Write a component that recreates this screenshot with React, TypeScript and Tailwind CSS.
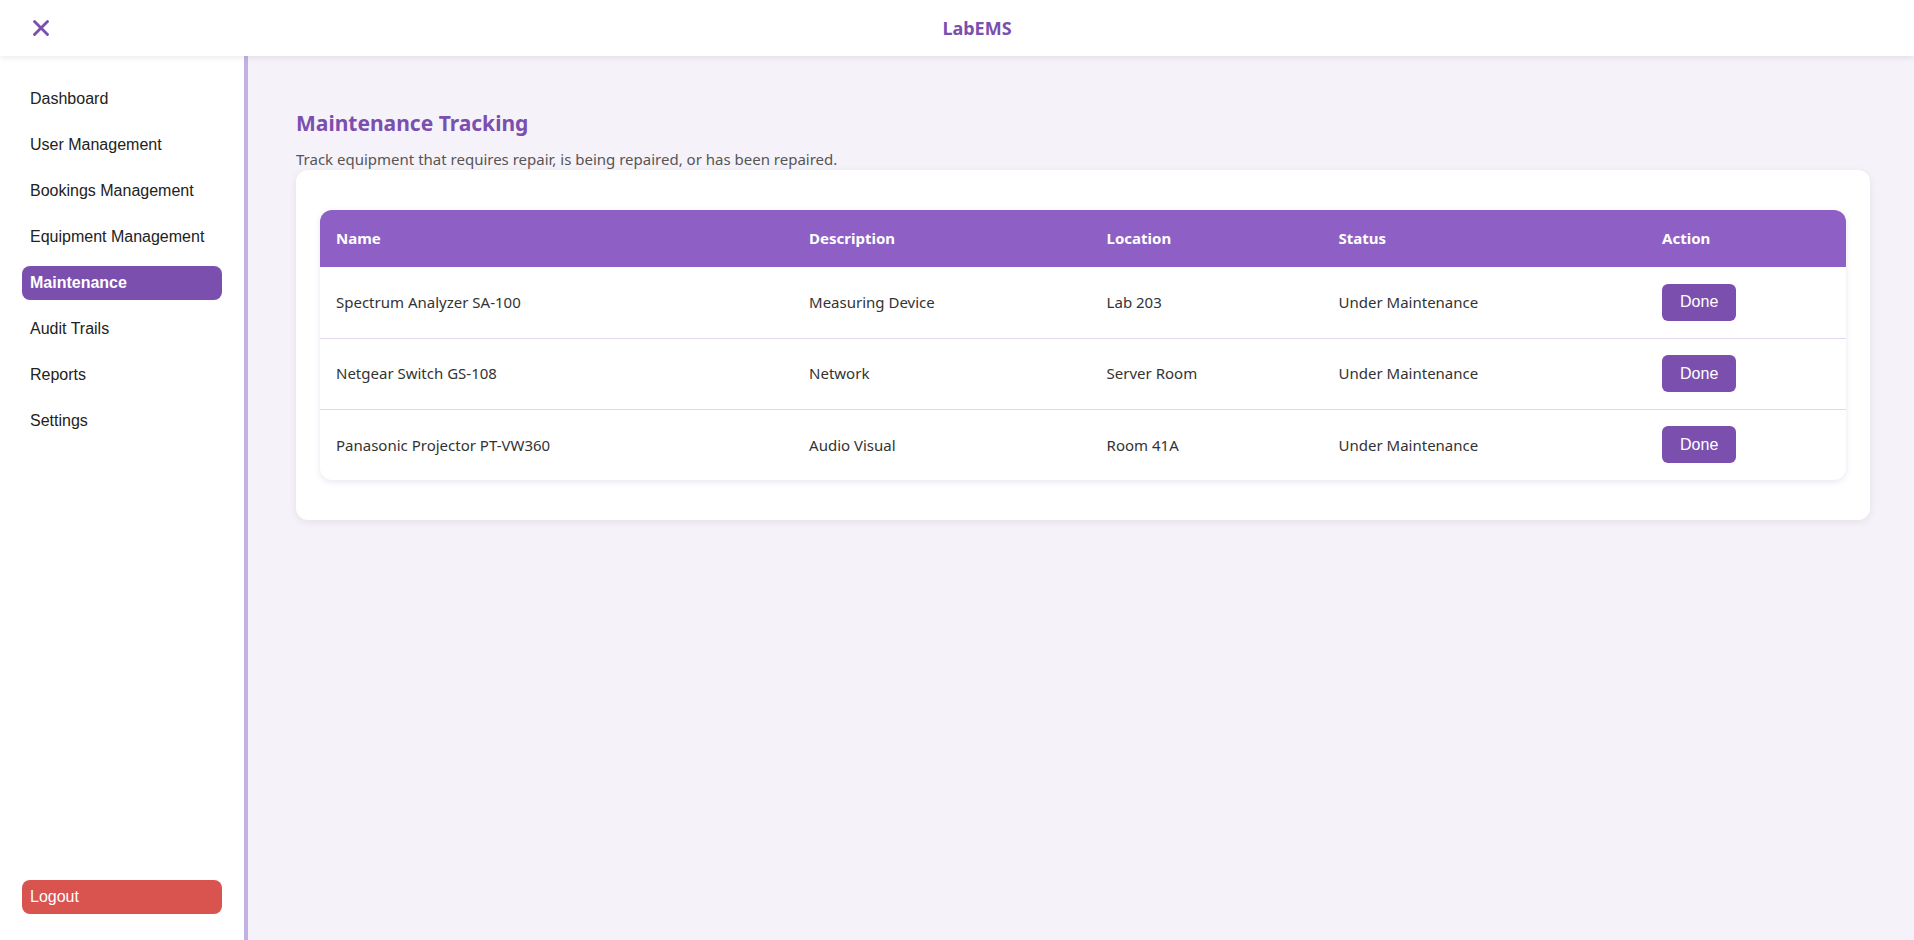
import { X } from "lucide-react";

const NAV = [
  "Dashboard",
  "User Management",
  "Bookings Management",
  "Equipment Management",
  "Maintenance",
  "Audit Trails",
  "Reports",
  "Settings",
];

const ROWS = [
  { name: "Spectrum Analyzer SA-100", desc: "Measuring Device", loc: "Lab 203", status: "Under Maintenance" },
  { name: "Netgear Switch GS-108", desc: "Network", loc: "Server Room", status: "Under Maintenance" },
  { name: "Panasonic Projector PT-VW360", desc: "Audio Visual", loc: "Room 41A", status: "Under Maintenance" },
];

const SEGOE = "font-['Noto_Sans',sans-serif]";

function Sidebar() {
  return (
    <aside className="w-[248px] shrink-0 bg-white border-r-4 border-[#c3b1e3] flex flex-col justify-between px-[22px] pt-[26px] pb-[26px] font-['Liberation_Sans',Arial,sans-serif]">
      <nav className="flex flex-col gap-3">
        {NAV.map((n) => {
          const active = n === "Maintenance";
          return (
            <a
              key={n}
              className={`h-[34px] flex items-center px-2 rounded-lg text-[16px] ${
                active ? "bg-[#7b4fae] text-white font-bold" : "text-[#222]"
              }`}
            >
              {n}
            </a>
          );
        })}
      </nav>
      <button className="h-[34px] w-full flex items-center px-2 rounded-lg bg-[#d9534f] text-white text-[16px] text-left">
        Logout
      </button>
    </aside>
  );
}

export default function App() {
  return (
    <div className="h-[940px] flex flex-col bg-[#f5f2fa] overflow-hidden">
      <header className={`h-[56px] shrink-0 bg-white flex items-center px-6 shadow-[0_2px_6px_rgba(0,0,0,0.08)] relative z-10 ${SEGOE}`}>
        <button className="w-10 h-10 flex items-center text-[#7b4fae]">
          <X size={26} strokeWidth={2.6} className="ml-[4px]" />
        </button>
        <div className="flex-1 text-center text-[18px] font-bold text-[#7b4fae]">LabEMS</div>
      </header>
      <div className="flex flex-1 min-h-0">
        <Sidebar />
        <main className={`flex-1 pl-12 pr-11 pt-[52px] ${SEGOE}`}>
          <h1 className="text-[21px] font-bold text-[#7b4fae] leading-[30px]">Maintenance Tracking</h1>
          <p className="text-[15px] text-[#555] mt-[10px] leading-[22px]">
            Track equipment that requires repair, is being repaired, or has been repaired.
          </p>
          <div className="bg-white rounded-xl shadow-[0_2px_8px_rgba(0,0,0,0.08)] px-6 py-10">
            <div className="rounded-xl overflow-hidden shadow-[0_2px_6px_rgba(80,40,140,0.12)]">
              <table className="w-full border-collapse text-left">
                <thead>
                  <tr className="bg-[#8e5fc4] text-white h-[57px]">
                    <th className="px-4 w-[31%] font-bold text-[15px]">Name</th>
                    <th className="px-4 w-[19.5%] font-bold text-[15px]">Description</th>
                    <th className="px-4 w-[15.2%] font-bold text-[15px]">Location</th>
                    <th className="px-4 w-[21.2%] font-bold text-[15px]">Status</th>
                    <th className="px-4 font-bold text-[15px]">Action</th>
                  </tr>
                </thead>
                <tbody>
                  {ROWS.map((r, i) => (
                    <tr key={r.name} className={`h-[71px] text-[15px] text-[#333] ${i < ROWS.length - 1 ? "border-b border-[#e2d8f0]" : ""}`}>
                      <td className="px-4">{r.name}</td>
                      <td className="px-4">{r.desc}</td>
                      <td className="px-4">{r.loc}</td>
                      <td className="px-4">{r.status}</td>
                      <td className="px-4">
                        <button className="h-[37px] px-[18px] rounded-md bg-[#7b4fae] text-white text-[16px] font-['Liberation_Sans',Arial,sans-serif]">
                          Done
                        </button>
                      </td>
                    </tr>
                  ))}
                </tbody>
              </table>
            </div>
          </div>
        </main>
      </div>
    </div>
  );
}
